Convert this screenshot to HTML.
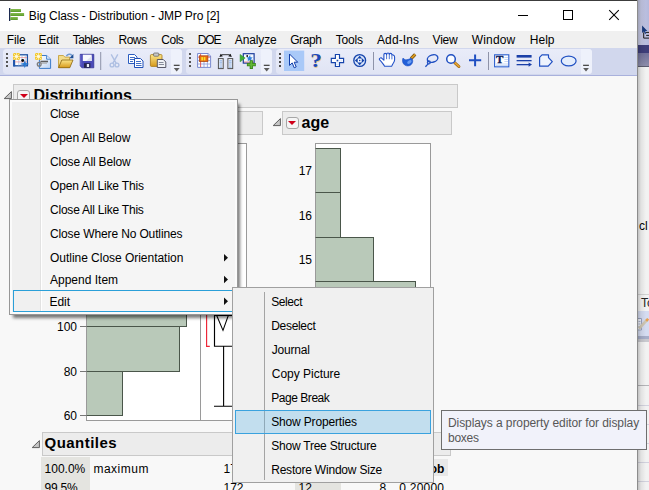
<!DOCTYPE html>
<html>
<head>
<meta charset="utf-8">
<title>Big Class - Distribution - JMP Pro [2]</title>
<style>
*{box-sizing:border-box;margin:0;padding:0}
html,body{width:649px;height:490px;overflow:hidden}
body{position:relative;font-family:"Liberation Sans",sans-serif;font-size:12px;color:#000;background:#e9e9e9}
.abs{position:absolute}
.t{position:absolute;white-space:nowrap;line-height:14px;height:14px}
/* background app on the right */
#bgapp{left:638px;top:0;width:11px;height:490px;background:#f2f2f2}
/* main window */
#win{left:0;top:0;width:638px;height:490px;background:#f8f8f8;border-right:1px solid #8c8c8c}
#topline{left:0;top:0;width:637px;height:1px;background:#3c3c3c}
#title{left:0;top:1px;width:637px;height:30px;background:#fff}
#menubar{left:0;top:31px;width:637px;height:17px;background:#f0f0f0}
#toolbar{left:0;top:48px;width:637px;height:28px;background:#d1d7ed;border-bottom:1px solid #a9b1dc}
.grp{position:absolute;top:49px;height:25px;background:linear-gradient(#e9ecf9,#e0e4f4);border-radius:3.5px;overflow:hidden}
.grp i{position:absolute;right:0;top:0;width:11.5px;height:25px;background:#eef1fb}
.mi{position:absolute;top:33px;height:14px;line-height:14px;white-space:nowrap}
.hdr{position:absolute;background:#ececec;border:1px solid #c9c9c9}
.hb{position:absolute;font-weight:bold;font-size:16px;line-height:18px;white-space:nowrap}
.menu{position:absolute;background:#f0f0f0;border:1px solid #979797;box-shadow:3px 4px 3px -1px rgba(0,0,0,.52)}

.it{position:absolute;white-space:nowrap;line-height:14px;height:14px}
.bar{position:absolute;background:#b9c9b9;border:1px solid #4a564a;border-left-color:#9a9a9a}
.ax{position:absolute;white-space:nowrap;line-height:14px;height:14px;text-align:right}
.rb{width:13px;height:12px;border:1px solid #a6a6a6;border-radius:3px;background:#f5f5f5}
.rb:after{content:"";position:absolute;left:1.4px;top:3.4px;border-left:4.1px solid transparent;border-right:4.1px solid transparent;border-top:4.2px solid #d0001a}
</style>
</head>
<body>
<div id="win" class="abs"></div>
<div id="bgapp" class="abs"></div>
<div id="topline" class="abs"></div>
<div id="title" class="abs"></div>
<div id="menubar" class="abs"></div>
<div id="toolbar" class="abs"></div>
<!-- title bar -->
<svg class="abs" style="left:8px;top:8px" width="18" height="14" viewBox="0 0 18 14">
<rect x="1" y="0" width="1.3" height="13" fill="#1c2a50"/>
<defs><linearGradient id="gg" x1="0" y1="0" x2="0" y2="1"><stop offset="0" stop-color="#86bd50"/><stop offset="1" stop-color="#5a9a2a"/></linearGradient></defs>
<rect x="2.3" y="1" width="10.7" height="3" fill="url(#gg)"/>
<rect x="2.3" y="5" width="13.8" height="3" fill="url(#gg)"/>
<rect x="2.3" y="9" width="7.5" height="3" fill="url(#gg)"/>
</svg>
<div class="t" id="ttl" style="left:28.8px;top:9px;font-size:12px;letter-spacing:-0.1px">Big Class - Distribution - JMP Pro [2]</div>
<svg class="abs" style="left:510px;top:5px" width="120" height="22" viewBox="0 0 120 22">
<path d="M8 10.5H18" stroke="#000" stroke-width="1" fill="none"/>
<rect x="53.5" y="5.5" width="9" height="9" stroke="#000" stroke-width="1" fill="none"/>
<path d="M99.2 5.2L108.8 14.8M108.8 5.2L99.2 14.8" stroke="#000" stroke-width="1.05" fill="none"/>
</svg>
<!-- menu bar -->
<div class="mi" style="left:6.8px;letter-spacing:-0.17px">File</div>
<div class="mi" style="left:38.6px;letter-spacing:-0.17px">Edit</div>
<div class="mi" style="left:72.8px;letter-spacing:-0.62px">Tables</div>
<div class="mi" style="left:118.5px;letter-spacing:-0.5px">Rows</div>
<div class="mi" style="left:161.2px;letter-spacing:-0.45px">Cols</div>
<div class="mi" style="left:197.8px;letter-spacing:-1.2px">DOE</div>
<div class="mi" style="left:234.8px;letter-spacing:-0.12px">Analyze</div>
<div class="mi" style="left:290.2px;letter-spacing:-0.4px">Graph</div>
<div class="mi" style="left:335.8px;letter-spacing:-0.22px">Tools</div>
<div class="mi" style="left:377px;letter-spacing:0.12px">Add-Ins</div>
<div class="mi" style="left:432.6px;letter-spacing:-0.25px">View</div>
<div class="mi" style="left:471.8px;letter-spacing:0.15px">Window</div>
<div class="mi" style="left:529.8px">Help</div>
<!-- toolbar groups -->
<div class="grp" style="left:3px;width:179px"><i></i></div>
<div class="grp" style="left:186px;width:86px"><i></i></div>
<div class="grp" style="left:276px;width:316px"><i></i></div>
<svg class="abs" style="left:0;top:49px" width="636" height="26" viewBox="0 49 636 26">
<defs>
<g id="grip"><rect x="0" y="53" width="2" height="2"/><rect x="0" y="57" width="2" height="2"/><rect x="0" y="61" width="2" height="2"/><rect x="0" y="65" width="2" height="2"/></g>
<g id="ovf"><rect x="-.2" y="64.7" width="5.8" height="1.3" fill="#4a4a4a"/><path d="M-.2 68H5.6L2.7 71.4Z" fill="#5c5c5c"/></g>
<linearGradient id="gy" x1="0" y1="0" x2="0" y2="1"><stop offset="0" stop-color="#fbe68a"/><stop offset="1" stop-color="#d79a1c"/></linearGradient>
<linearGradient id="gb" x1="0" y1="0" x2="1" y2="1"><stop offset="0" stop-color="#ffffff"/><stop offset="1" stop-color="#bcd4f4"/></linearGradient>
</defs>
<use href="#grip" x="6" fill="#555"/>
<use href="#grip" x="189" fill="#555"/>
<use href="#grip" x="279" fill="#4a4a4a"/>
<use href="#ovf" x="174"/>
<use href="#ovf" x="264"/>
<use href="#ovf" x="583.3"/>
<!-- separators -->
<rect x="100.2" y="52" width="1" height="18" fill="#8e93a8"/>
<rect x="373" y="52" width="1" height="18" fill="#8e93a8"/>
<rect x="488" y="52" width="1" height="18" fill="#8e93a8"/>
<!-- 1 new data table -->
<g>
<rect x="13.8" y="54.8" width="13.6" height="11" fill="#fff" stroke="#1c50a2" stroke-width="1.3"/>
<rect x="13.2" y="60" width="2" height="6.4" fill="#1f55ad"/>
<path d="M22 55.5V65.5M25.2 55.5V65.5M18.8 60V65.5" stroke="#9fc0ee" stroke-width=".8"/>
<path d="M15 57.6H27M15 61.9H27" stroke="#ee8a8a" stroke-width=".7"/>
<rect x="13" y="53" width="6.9" height="6.9" fill="#f2c832"/>
<path d="M16.45 53V59.9M13 56.45H19.9M13.4 53.4L19.5 59.5M19.5 53.4L13.4 59.5" stroke="#fdf3c4" stroke-width=".8"/>
<circle cx="16.45" cy="56.45" r="1.3" fill="#fffbe6"/>
<circle cx="22.7" cy="60.5" r="1.45" fill="#0a0a0a"/>
<path d="M24.8 60.4l1.1 2.5 3.3 1-3.3 1-1.1 3.3-1.1-3.3-3.9-1 3.9-1z" fill="#2a7ad2"/>
</g>
<!-- 2 new script -->
<g>
<path d="M39.4 55.5H46.6L50.6 59.2V68.4H39.4Z" fill="url(#gb)" stroke="#3a7ac8" stroke-width="1"/>
<path d="M46.6 55.5V59.2H50.6" fill="#e4eefb" stroke="#3a7ac8" stroke-width=".9"/>
<rect x="35" y="53" width="6.9" height="6.9" fill="#f2c832"/>
<path d="M38.45 53V59.9M35 56.45H41.9M35.4 53.4L41.5 59.5M41.5 53.4L35.4 59.5" stroke="#fdf3c4" stroke-width=".8"/>
<circle cx="38.45" cy="56.45" r="1.3" fill="#fffbe6"/>
<path d="M40.4 61.5H48" stroke="#5e5e5e" stroke-width="1.6"/>
<path d="M41 63.2H47" stroke="#a8a8a8" stroke-width="1"/>
<circle cx="39.2" cy="64.3" r="1.9" fill="none" stroke="#7c7c7c" stroke-width="1.3"/>
</g>
<!-- 3 open folder -->
<g>
<path d="M58.5 55.5H63.4L64.8 57.1H69.6V67.5H58.5Z" fill="#f3dc8c" stroke="#c29a2e" stroke-width=".8"/>
<path d="M61.8 60H73L69.8 67.7H58.5Z" fill="url(#gy)" stroke="#8a6410" stroke-width=".8" stroke-linejoin="round"/>
<path d="M66.4 56.2C67.6 54 70.4 53.7 72 55.5" fill="none" stroke="#6f9ad2" stroke-width="1.5"/>
<path d="M73.4 54V58.3H69.3Z" fill="#1f4f94"/>
</g>
<!-- 4 save -->
<g>
<path d="M80.2 54.3H93.8V67.8H82L80.2 66Z" fill="#4a4ab8" stroke="#2e2e90" stroke-width=".7"/>
<path d="M80.8 55V65.6" stroke="#7474d8" stroke-width=".8"/>
<rect x="82.8" y="54.7" width="8.9" height="6.3" fill="#f8f9fd"/>
<path d="M86 61L91.7 56V61Z" fill="#dfe3ee"/>
<rect x="84" y="63.2" width="6.4" height="4.6" fill="#24244c"/>
<rect x="86.8" y="64" width="2.3" height="3" fill="#e8ecf8"/>
</g>
<!-- 5 cut disabled -->
<g fill="none" stroke="#aebfe2" stroke-width="1.35">
<path d="M111.2 54.3L116.2 63.3M117.8 54.3L112.8 63.3"/>
<circle cx="112" cy="65" r="1.9"/><circle cx="117" cy="65" r="1.9"/>
</g>
<!-- 6 copy -->
<g>
<path d="M128.5 54.5H134.5L137 57V63.5H128.5Z" fill="#fff" stroke="#2a5cc0" stroke-width="1"/>
<path d="M130 57.5H135M130 59.5H135M130 61.5H133" stroke="#2a5cc0" stroke-width=".9"/>
<path d="M134.5 58.5H140.5L143 61V67.5H134.5Z" fill="#fff" stroke="#1f4fb8" stroke-width="1"/>
<path d="M136 61.5H141M136 63.5H141.5M136 65.5H141.5" stroke="#2a5cc0" stroke-width=".9"/>
</g>
<!-- 7 paste -->
<g>
<rect x="150.4" y="54.6" width="11.6" height="11.8" rx="1" fill="url(#gy)" stroke="#a87814" stroke-width=".8"/>
<rect x="153.6" y="53" width="5.2" height="3.2" rx=".8" fill="#c8c8c8" stroke="#5a5a5a" stroke-width=".7"/>
<path d="M157.3 59.5H163.3L165.8 62V67.5H157.3Z" fill="#f0f2f6" stroke="#4a4a5a" stroke-width=".9"/>
<path d="M158.8 62.5H163.5M158.8 64.5H164" stroke="#7a8090" stroke-width=".9"/>
</g>
<!-- 8 table orange -->
<g>
<path d="M197.6 53.5H208L210.6 56V67.4H197.6Z" fill="#fdfdff" stroke="#6c7ecb" stroke-width=".9"/>
<path d="M208 53.5V56H210.6" fill="#dfe5f6" stroke="#6c7ecb" stroke-width=".7"/>
<path d="M198 60.6H210.2M198 64H210.2M204 57V67M207.4 57V67" stroke="#8a9ad8" stroke-width=".8"/>
<path d="M200.6 53.8V67.2M198 57.1H210.2" stroke="#e24a4a" stroke-width=".9"/>
<rect x="199.4" y="55.8" width="8.5" height="5.8" fill="#ea6e12" stroke="#a8400a" stroke-width=".7"/>
<rect x="201.3" y="57.1" width="1.7" height="3.3" fill="#f9e228"/>
<rect x="203.7" y="57.1" width="1.7" height="3.3" fill="#f9e228"/>
</g>
<!-- 9 columns -->
<g>
<rect x="218.4" y="58.6" width="4.8" height="10" fill="#f2f6fc" stroke="#505050" stroke-width="1"/>
<rect x="227.9" y="58.6" width="4.8" height="10" fill="#f2f6fc" stroke="#505050" stroke-width="1"/>
<path d="M219.4 60.8H222.2M219.4 62.9H222.2M219.4 65H222.2M219.4 67.1H222.2M228.9 60.8H231.7M228.9 62.9H231.7M228.9 65H231.7M228.9 67.1H231.7" stroke="#8fb0e2" stroke-width="1.2"/>
<path d="M221.4 54.7H229.8" stroke="#222" stroke-width=".9"/>
<path d="M219.4 56.9L220.6 53.7L223 56.2ZM231.8 56.9L230.6 53.7L228.2 56.2Z" fill="#1a1a1a"/>
</g>
<!-- 10 run plus -->
<g>
<rect x="243.3" y="53.7" width="10.8" height="9.4" fill="#f6f9ff" stroke="#1c3c9c" stroke-width="1.2"/>
<path d="M244 62H253.6" stroke="#e06a6a" stroke-width=".7"/>
<path d="M246.6 59.6H253.4M250.6 54.4V62" stroke="#b4ccf0" stroke-width=".7"/>
<path d="M249.6 55.2l.9 2.1 2.3.3-1.8 1.4.6 2.3-2-1.3-2 1.3.6-2.3-1.8-1.4 2.3-.3z" fill="#2f80dc"/>
<circle cx="247.2" cy="56" r=".9" fill="#111"/>
<path d="M240.1 54.4L245.2 58.1L240.1 61.8Z" fill="#3fae35" stroke="#2b8a26" stroke-width=".5"/>
<path d="M251.3 60.3V69M246.9 64.65H255.8" stroke="#357f18" stroke-width="3.2"/>
<path d="M251.3 61V68.3M247.6 64.65H255.1" stroke="#62b638" stroke-width="1.7"/>
</g>
<!-- 11 arrow selected -->
<rect x="284" y="50.6" width="20.2" height="20.4" fill="#a9c9f8"/>
<path d="M289.5 54V65.4L292.2 62.9L294.2 67.8L296.2 66.9L294.2 62.2H297.7Z" fill="#fff" stroke="#0f3ca8" stroke-width="1" stroke-linejoin="miter"/>
<!-- 12 ? -->
<text x="310.8" y="67.2" font-family="Liberation Serif, serif" font-weight="bold" font-size="19.5" fill="#e8c890" transform="matrix(1.2 0 0 1 -62 .5)">?</text>
<text x="310.8" y="67.2" font-family="Liberation Serif, serif" font-weight="bold" font-size="19.5" fill="#1c48b8" transform="matrix(1.2 0 0 1 -62.6 0)">?</text>
<!-- 13 cross -->
<g>
<path d="M335.4 54.5H339.5V58.4H343.6V62.6H339.5V66.5H335.4V62.6H331.3V58.4H335.4Z" fill="#fff" stroke="#1544ac" stroke-width="1.15"/>
<path d="M336.2 62.8H338.8M336.2 64.6H338.8M340 59.6V61.6M341.8 59.6V61.6" stroke="#c6d8f6" stroke-width=".8"/>
<rect x="336.6" y="59.7" width="1.7" height="1.7" fill="#1544ac"/>
</g>
<!-- 14 target -->
<g>
<circle cx="359.7" cy="60.5" r="5.9" fill="#dbe6fb" stroke="#1544ac" stroke-width="1.35"/>
<path d="M359.7 55.7L362.1 58.5H357.3ZM359.7 65.3L362.1 62.5H357.3ZM354.9 60.5L357.7 58.1V62.9ZM364.5 60.5L361.7 58.1V62.9Z" fill="#1040a8"/>
<rect x="358.2" y="59" width="3" height="3" fill="#fff"/>
<rect x="359" y="59.8" width="1.4" height="1.4" fill="#1544ac"/>
</g>
<!-- 15 hand -->
<path d="M379.4 58.6L381 57.6L383.9 60.2V54.6Q383.9 53.4 385.2 53.4Q386.5 53.4 386.6 54.6Q386.7 53 388 53Q389.3 53 389.3 54.4Q389.4 53.4 390.6 53.4Q391.9 53.4 391.9 55Q392.2 54.6 393.2 55Q394.6 55.6 394.6 57V60Q394.4 62 392.8 64L391.6 66.3H384.6L383.6 64.6Q381.4 61.4 379.4 59.6Z" fill="#fff" stroke="#2050c8" stroke-width="1.1" stroke-linejoin="round"/>
<path d="M386.6 54.8V59.2M389.3 54.6V59.2M391.9 55.2V59.4" stroke="#2050c8" stroke-width=".8" fill="none"/>
<path d="M385 65.4H391.2" stroke="#c4d2ee" stroke-width="1"/>
<!-- 16 brush -->
<g>
<path d="M411 58.6L415.2 54.4" stroke="#6e480a" stroke-width="3.2" stroke-linecap="butt"/>
<path d="M411 58.6L415.2 54.4" stroke="#d8981e" stroke-width="2" stroke-linecap="butt"/>
<path d="M403 58C401.9 60.5 402.5 64 405.5 65.5C408.6 66.9 412.1 65.1 412.7 62C413.1 60 412.1 58.5 410.7 58.1C409.4 59.2 407 59.9 405.5 59.7C404.5 59.5 403.7 58.9 403 58Z" fill="#2260d8" stroke="#1a48bc" stroke-width=".5"/>
<ellipse cx="409.4" cy="62" rx="2.4" ry="1.5" transform="rotate(-30 409.4 62)" fill="#6a9cf2"/>
</g>
<!-- 17 lasso -->
<g fill="none" stroke="#1f4fc2" stroke-width="1.4">
<ellipse cx="432.6" cy="58.6" rx="5.4" ry="3.6" transform="rotate(-18 432.6 58.6)"/>
<circle cx="428.8" cy="62.4" r="1.5" stroke-width="1.1"/>
<path d="M428.4 63.6L425.4 66.8" stroke-width="1.3"/>
</g>
<!-- 18 magnifier -->
<g>
<path d="M454.6 62.6L459 66.6" stroke="#a86c10" stroke-width="2.8" stroke-linecap="round"/>
<path d="M454.6 62.6L459 66.6" stroke="#e8a838" stroke-width="1.4" stroke-linecap="round"/>
<circle cx="451" cy="59" r="4.3" fill="#fafcff" stroke="#1f4fc2" stroke-width="1.5"/>
</g>
<!-- 19 plus -->
<path d="M469 60.3H481.2M475.1 54.4V66.2" stroke="#1f4fc2" stroke-width="2"/>
<!-- 20 text -->
<g>
<rect x="494.6" y="54.8" width="14.2" height="12" fill="#fff" stroke="#2a5fd0" stroke-width="1.1"/>
<path d="M504.4 57.5H508M504.4 59.5H508M504.4 61.5H508M496 64H508M496 65.6H508" stroke="#c0d2f4" stroke-width=".9"/>
<text x="495.9" y="62.8" font-family="Liberation Serif, serif" font-weight="bold" font-size="11" fill="#0a1a58" stroke="#0a1a58" stroke-width=".35">T</text>
</g>
<!-- 21 lines -->
<g>
<rect x="516.6" y="55" width="15" height="2.6" fill="#1a3fa8"/>
<rect x="516.6" y="60" width="15" height="1.3" fill="#1a3fa8"/>
<rect x="516.6" y="64" width="12.5" height="1.3" fill="#1a3fa8"/>
<path d="M528.6 62.4L532 64.6L528.6 66.8Z" fill="#1a3fa8"/>
</g>
<!-- 22 polygon -->
<path d="M542 54.8H548.5V57.6L552.3 61.6L548.2 66.2H539.6V57.4Z" fill="#eef3fd" stroke="#1f4fc2" stroke-width="1.2" stroke-linejoin="round"/>
<!-- 23 ellipse -->
<ellipse cx="568.7" cy="61" rx="7.4" ry="4.8" fill="#e4edfc" stroke="#1f4fc2" stroke-width="1.2"/>
</svg>

<!-- right background app details -->
<div class="abs" style="left:638px;top:0;width:11px;height:45px;background:linear-gradient(90deg,#c9cce6,#b4b9dc)"></div>
<div class="abs" style="left:638px;top:45px;width:11px;height:8px;background:#3e3e7a"></div>
<div class="abs" style="left:638px;top:53px;width:11px;height:14px;background:linear-gradient(180deg,#70709a,#9090ac)"></div>
<div class="abs" style="left:638px;top:66px;width:11px;height:1px;background:#5c5c70"></div>
<svg class="abs" style="left:638px;top:18px" width="11" height="24" viewBox="638 18 11 24">
<path d="M643.7 32.4V38.1H649M646 32.4H649M646.2 35.4H649" stroke="#1a1a1a" stroke-width="1" fill="none"/>
<path d="M642.1 25.6V33L643.9 31.4L645.1 33.9L646.3 33.3L645.1 30.9H647.4Z" fill="#17397c"/>
</svg>
<div class="abs" style="left:638px;top:294px;width:11px;height:1px;background:#d2d2d2"></div>
<div class="abs" style="left:638px;top:295px;width:11px;height:16px;background:#f3f3f3"></div>
<div class="abs" style="left:638px;top:311px;width:11px;height:25px;background:#d5dcf1"></div>
<div class="abs" style="left:638px;top:336px;width:11px;height:3px;background:#a6aec9"></div>
<div class="abs" style="left:638px;top:339px;width:11px;height:3px;background:#c9c9cf"></div>
<div class="abs" style="left:638px;top:385px;width:11px;height:1px;background:#b4b4b8"></div>
<div class="abs" style="left:638px;top:405px;width:11px;height:1px;background:#d2d2de"></div>
<div class="abs" style="left:638px;top:424px;width:11px;height:1px;background:#d2d2de"></div>
<div class="abs" style="left:638px;top:443px;width:11px;height:1px;background:#d2d2de"></div>
<div class="abs" style="left:638px;top:462px;width:11px;height:1px;background:#d2d2de"></div>
<div class="abs" style="left:638px;top:481px;width:11px;height:1px;background:#d2d2de"></div>
<div class="t" style="left:639px;top:219px;">cl</div>
<div class="t" style="left:641px;top:296px;color:#222">To</div>
<svg class="abs" style="left:638px;top:311px" width="11" height="25" viewBox="638 311 11 25">
<path d="M638 318.5H641.5V330H638" stroke="#9aa3bf" stroke-width="1" fill="#eef1f9"/>
<path d="M638.5 321.5H640.5M638.5 324H640.5M638.5 326.5H640.5" stroke="#9aa3bf" stroke-width=".8"/>
<path d="M639 328.5L647.5 319.5" stroke="#cfc7b4" stroke-width="2.8"/>
<path d="M646.2 320.8L648.2 318.8" stroke="#e6a050" stroke-width="2.6"/>
</svg>
<div class="abs" style="left:638px;top:0;width:8px;height:490px;background:linear-gradient(90deg,rgba(0,0,0,.2),rgba(0,0,0,.07) 3px,rgba(0,0,0,0) 8px)"></div>

<!-- Distributions outline -->
<svg class="abs" style="left:3px;top:90px" width="10" height="10" viewBox="0 0 10 10"><path d="M8.4 1.6V8.6H1.2Z" fill="#c6c6c6" stroke="#5e5e5e" stroke-width="1" stroke-linejoin="miter"/></svg>
<div class="hdr" style="left:13px;top:84px;width:445px;height:24px"></div>
<div class="abs rb" style="left:17.4px;top:90px"></div>
<div class="hb" id="h_dist" style="left:33.6px;top:87px;letter-spacing:-0.04px">Distributions</div>

<!-- weight header (mostly hidden) -->
<div class="hdr" style="left:32px;top:111px;width:231px;height:24px"></div>
<!-- weight plot frames -->
<div class="abs" style="left:86px;top:143px;width:115px;height:278px;background:#fff;border:1px solid #9a9a9a"></div>
<div class="abs" style="left:200px;top:143px;width:47px;height:278px;background:#fff;border:1px solid #9a9a9a"></div>
<div class="bar" style="left:86px;top:282px;width:101px;height:45px"></div>
<div class="bar" style="left:86px;top:326px;width:94px;height:46px"></div>
<div class="bar" style="left:86px;top:371px;width:37px;height:45px"></div>
<div class="ax" style="left:49px;width:28px;top:320px">100</div>
<div class="ax" style="left:49px;width:28px;top:365px">80</div>
<div class="ax" style="left:49px;width:28px;top:409px">60</div>
<div class="abs" style="left:80px;top:326px;width:6px;height:1px;background:#777"></div>
<div class="abs" style="left:80px;top:371px;width:6px;height:1px;background:#777"></div>
<div class="abs" style="left:80px;top:415px;width:6px;height:1px;background:#777"></div>
<!-- boxplot -->
<svg class="abs" style="left:201px;top:300px" width="45" height="120" viewBox="201 300 45 120">
<path d="M206.6 300V346.3H209.8" stroke="#ee2436" stroke-width="1.15" fill="none"/>
<path d="M246 315.5H214.5V346.2H246" stroke="#000" stroke-width="1.15" fill="none"/>
<path d="M216.7 315.5L223 330.4L228.3 315.5" stroke="#000" stroke-width="1.05" fill="none"/>
<path d="M223.6 346V406.3M214 406.3H234" stroke="#000" stroke-width="1.1" fill="none"/>
</svg>

<!-- age outline -->
<svg class="abs" style="left:272px;top:117px" width="10" height="10" viewBox="0 0 10 10"><path d="M8.4 1.6V8.6H1.2Z" fill="#c6c6c6" stroke="#5e5e5e" stroke-width="1" stroke-linejoin="miter"/></svg>
<div class="hdr" style="left:282px;top:111px;width:170px;height:24px"></div>
<div class="abs rb" style="left:286px;top:117px"></div>
<div class="hb" id="h_age" style="left:301.6px;top:113.5px">age</div>
<div class="abs" style="left:315px;top:143px;width:116px;height:278px;background:#fff;border:1px solid #9a9a9a"></div>
<div class="bar" style="left:315px;top:148px;width:26px;height:45px"></div>
<div class="bar" style="left:315px;top:192px;width:26px;height:46px"></div>
<div class="bar" style="left:315px;top:237px;width:59px;height:45px"></div>
<div class="bar" style="left:315px;top:281px;width:101px;height:45px"></div>
<div class="ax" style="left:285px;width:27px;top:164px">17</div>
<div class="ax" style="left:285px;width:27px;top:209px">16</div>
<div class="ax" style="left:285px;width:27px;top:253px">15</div>

<!-- Quantiles -->
<svg class="abs" style="left:31px;top:439px" width="10" height="10" viewBox="0 0 10 10"><path d="M8.4 1.6V8.6H1.2Z" fill="#c6c6c6" stroke="#5e5e5e" stroke-width="1" stroke-linejoin="miter"/></svg>
<div class="hdr" style="left:42px;top:432px;width:221px;height:24px"></div>
<div class="hb" id="h_q" style="left:44.6px;top:434.3px;font-size:15px;letter-spacing:0.45px">Quantiles</div>
<div class="abs" style="left:41px;top:457px;width:49px;height:33px;background:#e4e4e0"></div>
<div class="t" style="left:44.6px;top:462px">100.0%</div>
<div class="t" style="left:44.6px;top:481px;letter-spacing:-0.25px">99.5%</div>
<div class="t" style="left:93.4px;top:462px;letter-spacing:0.5px">maximum</div>
<div class="t" style="left:223.5px;top:462px">172</div>
<div class="t" style="left:223.5px;top:481px">172</div>
<!-- age frequencies (mostly hidden) -->
<div class="hdr" style="left:282px;top:432px;width:169px;height:24px"></div>
<div class="abs" style="left:295px;top:458px;width:46px;height:32px;background:#e4e4e0"></div>
<div class="abs" style="left:399px;top:459px;width:49px;height:17px;background:#e8e8e8"></div>
<div class="t" style="left:417px;top:462px;font-weight:bold">Prob</div>
<div class="t" style="left:298.5px;top:481px">12</div>
<div class="t" style="left:379.6px;top:481px">8</div>
<div class="t" style="left:399.3px;top:481px;letter-spacing:0.22px">0.20000</div>

<!-- context menu 1 -->
<div class="menu" id="m1" style="left:9px;top:99px;width:229px;height:216px;background:#fbfbfb">
<div class="abs" style="left:2px;top:2px;width:28px;height:210px;background:#f0f0f0"></div>
<div class="abs" style="left:30px;top:2px;width:1px;height:210px;background:#e2e2e2"></div>
<div class="abs" style="left:31px;top:2px;width:1px;height:210px;background:#fff"></div>
<div class="abs" style="left:32px;top:2px;width:193px;height:210px;background:#f5f5f5"></div>
</div>
<div class="it" style="left:50px;top:107px;letter-spacing:-0.3px">Close</div>
<div class="it" style="left:50px;top:131px;letter-spacing:-0.08px">Open All Below</div>
<div class="it" style="left:50px;top:155px;letter-spacing:-0.14px">Close All Below</div>
<div class="it" style="left:50px;top:179px;letter-spacing:-0.14px">Open All Like This</div>
<div class="it" style="left:50px;top:203px;letter-spacing:-0.22px">Close All Like This</div>
<div class="it" style="left:50px;top:227px;letter-spacing:-0.13px">Close Where No Outlines</div>
<div class="it" style="left:50px;top:251px;letter-spacing:-0.03px">Outline Close Orientation</div>
<div class="it" style="left:50px;top:273px">Append Item</div>
<div class="abs" style="left:13px;top:290px;width:221px;height:22px;border:1px solid #2a9fd8"></div>
<div class="it" style="left:49.6px;top:295px;letter-spacing:-0.1px">Edit</div>
<svg class="abs" style="left:222px;top:250px" width="8" height="60" viewBox="222 250 8 60"><path d="M224 254V261.4L228 257.7ZM224 275.8V283.2L228 279.5ZM224 297.6V305L228 301.3Z" fill="#111"/></svg>

<!-- submenu -->
<div class="menu" id="m2" style="left:232px;top:287px;width:202px;height:196px;border-color:#a0a0a0;box-shadow:none">
<div class="abs" style="left:31px;top:4px;width:1px;height:188px;background:#a4a4a4"></div>
</div>
<div class="abs" style="left:235px;top:410px;width:196px;height:24px;border:1px solid #3aa2de;background:#c2deee"></div>
<div class="abs" style="left:264px;top:411px;width:1px;height:22px;background:#8fa9b8"></div>
<div class="it" style="left:271.2px;top:295px;letter-spacing:-0.4px">Select</div>
<div class="it" style="left:271.2px;top:319px;letter-spacing:-0.3px">Deselect</div>
<div class="it" style="left:271.8px;top:343px;letter-spacing:-0.2px">Journal</div>
<div class="it" style="left:271.8px;top:367px;letter-spacing:-0.02px">Copy Picture</div>
<div class="it" style="left:271.2px;top:391px;letter-spacing:-0.45px">Page Break</div>
<div class="it" style="left:271.2px;top:415px;letter-spacing:-0.16px">Show Properties</div>
<div class="it" style="left:271.2px;top:439px;letter-spacing:-0.22px">Show Tree Structure</div>
<div class="it" style="left:271.2px;top:463px;letter-spacing:-0.21px">Restore Window Size</div>

<!-- tooltip -->
<div class="abs" style="left:441px;top:410px;width:206px;height:40px;background:#f1f2fa;border:1px solid #6e6e6e"></div>
<div class="t" style="left:448px;top:416px;color:#575757;letter-spacing:-0.08px">Displays a property editor for display</div>
<div class="t" style="left:448px;top:431px;color:#575757;letter-spacing:-0.25px">boxes</div>

</body>
</html>
